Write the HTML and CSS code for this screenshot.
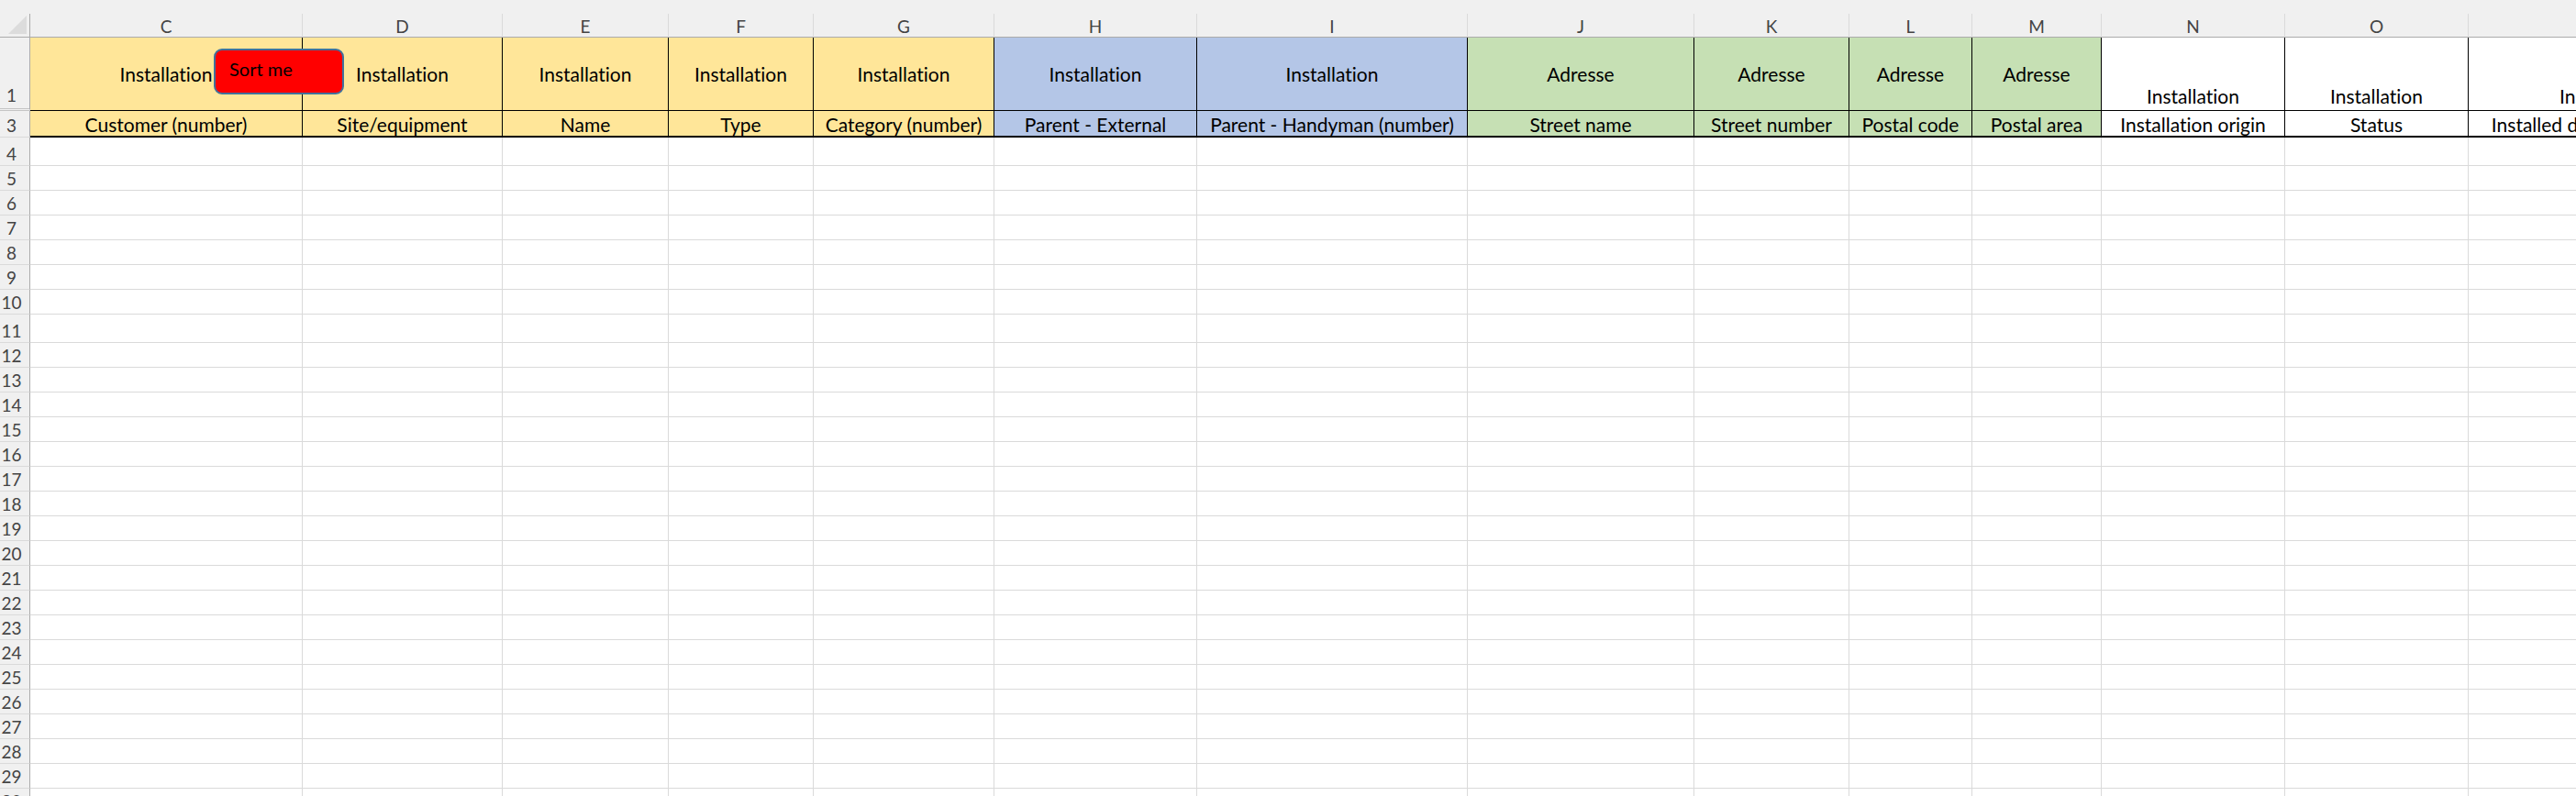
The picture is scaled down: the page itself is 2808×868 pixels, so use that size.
FILE: index.html
```html
<!DOCTYPE html>
<html lang="en">
<head>
<meta charset="utf-8">
<title>Installations</title>
<link rel="stylesheet" href="styles.css">
</head>
<body>
<div class="app">
  <div class="strip"></div>
  <div class="row colhead">
    <div class="corner"><svg width="20" height="20" viewBox="0 0 20 20"><polygon points="20,0 20,20 0,20" fill="#dcdcdc"/></svg></div>
    <div class="ch">C</div><div class="ch">D</div><div class="ch">E</div><div class="ch">F</div><div class="ch">G</div><div class="ch">H</div><div class="ch">I</div><div class="ch">J</div><div class="ch">K</div><div class="ch">L</div><div class="ch">M</div><div class="ch">N</div><div class="ch">O</div><div class="ch">P</div>
  </div>
  <div class="row r1">
    <div class="rh rh1">1</div>
    <div class="hc y">Installation</div>
    <div class="hc y">Installation</div>
    <div class="hc y">Installation</div>
    <div class="hc y">Installation</div>
    <div class="hc y">Installation</div>
    <div class="hc b">Installation</div>
    <div class="hc b">Installation</div>
    <div class="hc g">Adresse</div>
    <div class="hc g">Adresse</div>
    <div class="hc g">Adresse</div>
    <div class="hc g">Adresse</div>
    <div class="hc w bottom">Installation</div>
    <div class="hc w bottom">Installation</div>
    <div class="hc w bottom">Installation</div>
  </div>
  <div class="row r3">
    <div class="rh">3</div>
    <div class="hc y">Customer (number)</div>
    <div class="hc y">Site/equipment</div>
    <div class="hc y">Name</div>
    <div class="hc y">Type</div>
    <div class="hc y">Category (number)</div>
    <div class="hc b">Parent - External</div>
    <div class="hc b">Parent - Handyman (number)</div>
    <div class="hc g">Street name</div>
    <div class="hc g">Street number</div>
    <div class="hc g">Postal code</div>
    <div class="hc g">Postal area</div>
    <div class="hc w">Installation origin</div>
    <div class="hc w">Status</div>
    <div class="hc w">Installed date (dd.mm.yyyy)</div>
  </div>
  <div class="row data tall"><div class="rh">4</div><span></span><span></span><span></span><span></span><span></span><span></span><span></span><span></span><span></span><span></span><span></span><span></span><span></span><span></span></div>
  <div class="row data"><div class="rh">5</div><span></span><span></span><span></span><span></span><span></span><span></span><span></span><span></span><span></span><span></span><span></span><span></span><span></span><span></span></div>
  <div class="row data"><div class="rh">6</div><span></span><span></span><span></span><span></span><span></span><span></span><span></span><span></span><span></span><span></span><span></span><span></span><span></span><span></span></div>
  <div class="row data"><div class="rh">7</div><span></span><span></span><span></span><span></span><span></span><span></span><span></span><span></span><span></span><span></span><span></span><span></span><span></span><span></span></div>
  <div class="row data"><div class="rh">8</div><span></span><span></span><span></span><span></span><span></span><span></span><span></span><span></span><span></span><span></span><span></span><span></span><span></span><span></span></div>
  <div class="row data"><div class="rh">9</div><span></span><span></span><span></span><span></span><span></span><span></span><span></span><span></span><span></span><span></span><span></span><span></span><span></span><span></span></div>
  <div class="row data"><div class="rh">10</div><span></span><span></span><span></span><span></span><span></span><span></span><span></span><span></span><span></span><span></span><span></span><span></span><span></span><span></span></div>
  <div class="row data tall"><div class="rh">11</div><span></span><span></span><span></span><span></span><span></span><span></span><span></span><span></span><span></span><span></span><span></span><span></span><span></span><span></span></div>
  <div class="row data"><div class="rh">12</div><span></span><span></span><span></span><span></span><span></span><span></span><span></span><span></span><span></span><span></span><span></span><span></span><span></span><span></span></div>
  <div class="row data"><div class="rh">13</div><span></span><span></span><span></span><span></span><span></span><span></span><span></span><span></span><span></span><span></span><span></span><span></span><span></span><span></span></div>
  <div class="row data"><div class="rh">14</div><span></span><span></span><span></span><span></span><span></span><span></span><span></span><span></span><span></span><span></span><span></span><span></span><span></span><span></span></div>
  <div class="row data"><div class="rh">15</div><span></span><span></span><span></span><span></span><span></span><span></span><span></span><span></span><span></span><span></span><span></span><span></span><span></span><span></span></div>
  <div class="row data"><div class="rh">16</div><span></span><span></span><span></span><span></span><span></span><span></span><span></span><span></span><span></span><span></span><span></span><span></span><span></span><span></span></div>
  <div class="row data"><div class="rh">17</div><span></span><span></span><span></span><span></span><span></span><span></span><span></span><span></span><span></span><span></span><span></span><span></span><span></span><span></span></div>
  <div class="row data"><div class="rh">18</div><span></span><span></span><span></span><span></span><span></span><span></span><span></span><span></span><span></span><span></span><span></span><span></span><span></span><span></span></div>
  <div class="row data"><div class="rh">19</div><span></span><span></span><span></span><span></span><span></span><span></span><span></span><span></span><span></span><span></span><span></span><span></span><span></span><span></span></div>
  <div class="row data"><div class="rh">20</div><span></span><span></span><span></span><span></span><span></span><span></span><span></span><span></span><span></span><span></span><span></span><span></span><span></span><span></span></div>
  <div class="row data"><div class="rh">21</div><span></span><span></span><span></span><span></span><span></span><span></span><span></span><span></span><span></span><span></span><span></span><span></span><span></span><span></span></div>
  <div class="row data"><div class="rh">22</div><span></span><span></span><span></span><span></span><span></span><span></span><span></span><span></span><span></span><span></span><span></span><span></span><span></span><span></span></div>
  <div class="row data"><div class="rh">23</div><span></span><span></span><span></span><span></span><span></span><span></span><span></span><span></span><span></span><span></span><span></span><span></span><span></span><span></span></div>
  <div class="row data"><div class="rh">24</div><span></span><span></span><span></span><span></span><span></span><span></span><span></span><span></span><span></span><span></span><span></span><span></span><span></span><span></span></div>
  <div class="row data"><div class="rh">25</div><span></span><span></span><span></span><span></span><span></span><span></span><span></span><span></span><span></span><span></span><span></span><span></span><span></span><span></span></div>
  <div class="row data"><div class="rh">26</div><span></span><span></span><span></span><span></span><span></span><span></span><span></span><span></span><span></span><span></span><span></span><span></span><span></span><span></span></div>
  <div class="row data"><div class="rh">27</div><span></span><span></span><span></span><span></span><span></span><span></span><span></span><span></span><span></span><span></span><span></span><span></span><span></span><span></span></div>
  <div class="row data"><div class="rh">28</div><span></span><span></span><span></span><span></span><span></span><span></span><span></span><span></span><span></span><span></span><span></span><span></span><span></span><span></span></div>
  <div class="row data"><div class="rh">29</div><span></span><span></span><span></span><span></span><span></span><span></span><span></span><span></span><span></span><span></span><span></span><span></span><span></span><span></span></div>
  <div class="row data"><div class="rh">30</div><span></span><span></span><span></span><span></span><span></span><span></span><span></span><span></span><span></span><span></span><span></span><span></span><span></span><span></span></div>
  <button class="sort-btn" type="button">Sort me</button>
</div>
</body>
</html>
```
FILE: styles.css
```css
* {
  box-sizing: border-box;
}

html,
body {
  margin: 0;
  padding: 0;
}

body {
  width: 2808px;
  height: 868px;
  overflow: hidden;
  background: #ffffff;
  font-family: "Lato", "Liberation Sans", sans-serif;
  font-variant-ligatures: none;
  color: #000000;
}

.app {
  position: relative;
  width: 2808px;
}

.strip {
  height: 15px;
  background: #f0f0f0;
}

.row {
  display: grid;
  grid-template-columns: 33px 297px 218px 181px 158px 197px 221px 295px 247px 169px 134px 141px 200px 200px 300px;
  height: 27px;
}

.colhead {
  height: 26px;
  background: #f0f0f0;
}

.corner {
  display: flex;
  align-items: flex-end;
  justify-content: flex-end;
  padding: 0 3px 3px 0;
  border-right: 1px solid #ababab;
  border-bottom: 1px solid #ababab;
}

.ch {
  display: flex;
  align-items: center;
  justify-content: center;
  border-right: 1px solid #dadada;
  border-bottom: 1px solid #ababab;
  font-size: 19px;
  color: #444444;
  padding-top: 2px;
}

.rh {
  display: flex;
  align-items: flex-end;
  justify-content: center;
  padding: 0 7px 1px 0;
  background: #f0f0f0;
  border-right: 1px solid #ababab;
  border-bottom: 1px solid #dadada;
  font-size: 19px;
  line-height: 22px;
  color: #444444;
}

.rh1 {
  border-bottom: 3px double #c4c4c4;
  padding-bottom: 3px;
}

.r1 {
  height: 80px;
}

.r3 {
  height: 29px;
}

.tall {
  height: 31px;
}

.hc {
  display: flex;
  align-items: center;
  justify-content: center;
  border-right: 1px solid #000000;
  font-size: 21px;
  white-space: nowrap;
  overflow: hidden;
}

.r1 .hc {
  border-bottom: 1px solid #000000;
}

.r3 .hc {
  border-bottom: 2px solid #000000;
  padding-top: 1px;
}

.hc.bottom {
  align-items: flex-end;
  padding-bottom: 3px;
}

.y {
  background: #ffe699;
}

.b {
  background: #b4c6e7;
}

.g {
  background: #c6e0b4;
}

.w {
  background: #ffffff;
}

.data > span {
  border-right: 1px solid #dadada;
  border-bottom: 1px solid #dadada;
}

.sort-btn {
  position: absolute;
  left: 233px;
  top: 53px;
  width: 142px;
  height: 50px;
  margin: 0;
  padding: 8px 0 0 15px;
  background: #ff0000;
  border: 2px solid #41719c;
  border-radius: 9px;
  font-family: "Lato", "Liberation Sans", sans-serif;
  font-variant-ligatures: none;
  font-size: 20px;
  line-height: 24px;
  color: #000000;
  text-align: left;
  display: flex;
  align-items: flex-start;
}
```
